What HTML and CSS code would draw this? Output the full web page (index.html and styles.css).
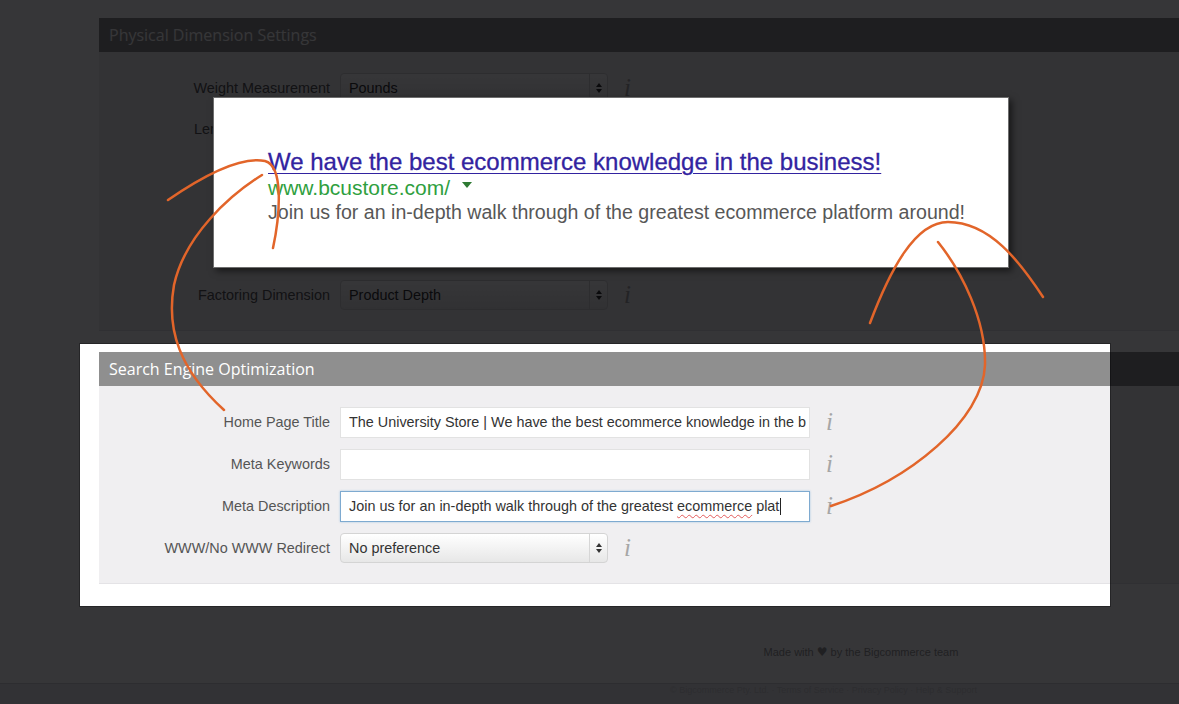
FILE: index.html
```html
<!DOCTYPE html>
<html lang="en">
<head>
<meta charset="utf-8">
<title>Search Engine Optimization</title>
<link rel="stylesheet" href="styles.css">
</head>
<body>
<div class="page">
  <div class="content">
    <section class="panel">
      <div class="panel-head">Physical Dimension Settings</div>
      <div class="panel-body dim-body">
        <div class="row"><div class="label">Weight Measurement</div><div class="select"><span class="select-text">Pounds</span><span class="arrows"><svg width="6" height="10" viewBox="0 0 6 10"><path d="M3 0 L6 4 L0 4 Z M0 6 L6 6 L3 10 Z" fill="#333"/></svg></span></div><span class="info">i</span></div>
        <div class="row"><div class="label">Length Measurement</div><div class="select"><span class="select-text"></span><span class="arrows"><svg width="6" height="10" viewBox="0 0 6 10"><path d="M3 0 L6 4 L0 4 Z M0 6 L6 6 L3 10 Z" fill="#333"/></svg></span></div></div>
        <div class="row"><div class="label"></div><div class="input short"></div></div>
        <div class="row"><div class="label"></div><div class="input short"></div></div>
        <div class="row"><div class="label"></div><div class="input short"></div></div>
        <div class="row"><div class="label">Factoring Dimension</div><div class="select"><span class="select-text">Product Depth</span><span class="arrows"><svg width="6" height="10" viewBox="0 0 6 10"><path d="M3 0 L6 4 L0 4 Z M0 6 L6 6 L3 10 Z" fill="#333"/></svg></span></div><span class="info">i</span></div>
      </div>
    </section>

    <section class="panel seo">
      <div class="panel-head">Search Engine Optimization</div>
      <div class="panel-body">
        <div class="row"><div class="label">Home Page Title</div><div class="input">The University Store | We have the best ecommerce knowledge in the b</div><span class="info">i</span></div>
        <div class="row"><div class="label">Meta Keywords</div><div class="input"></div><span class="info">i</span></div>
        <div class="row"><div class="label">Meta Description</div><div class="input focus">Join us for an in-depth walk through of the greatest <span class="misspelled">ecommerce</span> plat<span class="caret"></span></div><span class="info">i</span></div>
        <div class="row"><div class="label">WWW/No WWW Redirect</div><div class="select"><span class="select-text">No preference</span><span class="arrows"><svg width="6" height="10" viewBox="0 0 6 10"><path d="M3 0 L6 4 L0 4 Z M0 6 L6 6 L3 10 Z" fill="#333"/></svg></span></div><span class="info">i</span></div>
      </div>
    </section>

    <footer class="footer">Made with <span class="heart">♥</span> by the Bigcommerce team</footer>
  </div>
  <div class="bottom-bar">© Bigcommerce Pty. Ltd. · Terms of Service · Privacy Policy · Help &amp; Support</div>
</div>

<div class="spotlight"></div>

<div class="serp">
  <a class="serp-title">We have the best ecommerce knowledge in the business!</a>
  <div class="serp-url">www.bcustore.com/<span class="serp-caret"></span></div>
  <div class="serp-desc">Join us for an in-depth walk through of the greatest ecommerce platform around!</div>
</div>

<svg class="annot" width="1179" height="704" viewBox="0 0 1179 704">
  <g fill="none" stroke="#e2652a" stroke-width="2.5" stroke-linecap="round">
    <path d="M168,200 C200,178 240,156 265,161 C284,166 280,215 273,248"/>
    <path d="M262,175 C230,195 185,235 174,285 C166,330 180,370 224,410"/>
    <path d="M870,323 C890,270 915,222 948,222 C990,222 1020,262 1043,297"/>
    <path d="M938,242 C962,272 986,320 985,365 C983,420 910,480 831,506"/>
  </g>
</svg>
</body>
</html>
```

FILE: styles.css
```css
* { box-sizing: border-box; }

html, body {
  margin: 0;
  padding: 0;
}

body {
  position: relative;
  width: 1179px;
  height: 704px;
  overflow: hidden;
  background: #ffffff;
  font-family: "Liberation Sans", Arial, sans-serif;
}

.page {
  display: flex;
  flex-direction: column;
  height: 704px;
}

.content {
  flex: 1;
  width: 1524px;
  margin-left: 99px;
  padding-top: 18px;
}

.panel + .panel {
  margin-top: 21px;
}

.panel-head {
  height: 34px;
  padding-left: 10px;
  background: #8f8f8f;
  color: #ffffff;
  font-family: "Open Sans", "Liberation Sans", sans-serif;
  font-size: 16px;
  line-height: 34px;
}

.panel-body {
  display: flex;
  flex-direction: column;
  gap: 11px;
  padding: 21px 0 19px;
  background: #f0eff1;
  border-bottom: 1px solid #e4e3e6;
}

.dim-body {
  padding-top: 20px;
  gap: 10.6px;
}

.row {
  display: flex;
  align-items: center;
  height: 31px;
}

.label {
  width: 231px;
  margin-right: 10px;
  text-align: right;
  font-size: 14.4px;
  color: #555555;
  white-space: nowrap;
}

.input {
  width: 470px;
  height: 31px;
  padding: 0 8px;
  background: #ffffff;
  border: 1px solid #e2e2e2;
  font-size: 14.4px;
  line-height: 29px;
  color: #333333;
  white-space: nowrap;
  overflow: hidden;
}

.input.short {
  width: 268px;
}

.input.focus {
  border-color: #7eaad0;
  box-shadow: 0 0 2px rgba(82, 150, 210, 0.45);
}

.misspelled {
  text-decoration: underline wavy #e25a5a;
  text-decoration-thickness: 1px;
  text-underline-offset: 3px;
}

.caret {
  display: inline-block;
  width: 1px;
  height: 17px;
  margin-left: 1px;
  vertical-align: -4px;
  background: #222222;
}

.select {
  display: flex;
  align-items: stretch;
  width: 268px;
  height: 30px;
  border: 1px solid #d4d4d4;
  border-radius: 4px;
  background: linear-gradient(#ffffff, #e7e7e7);
  font-size: 14.4px;
  color: #333333;
}

.select-text {
  flex: 1;
  padding-left: 8px;
  line-height: 28px;
}

.arrows {
  display: flex;
  align-items: center;
  justify-content: center;
  width: 18px;
  border-left: 1px solid #d6d6d6;
}

.info {
  margin-left: 16px;
  font-family: "Liberation Serif", "Times New Roman", serif;
  font-style: italic;
  font-size: 25px;
  line-height: 24px;
  color: #a6a6a6;
}

.footer {
  padding-top: 61px;
  text-align: center;
  font-size: 11px;
  line-height: 14px;
  color: #999999;
}

.heart {
  font-family: "DejaVu Sans", sans-serif;
  font-size: 12px;
}

.bottom-bar {
  height: 21px;
  padding-top: 1px;
  padding-left: 670px;
  border-top: 1px solid #d3d3d7;
  background: #ececf0;
  font-size: 9px;
  color: #d2d2d6;
  white-space: nowrap;
}

/* dimming overlay with a clear window around the SEO panel */
.spotlight {
  position: absolute;
  left: 80px;
  top: 344px;
  width: 1030px;
  height: 262px;
  pointer-events: none;
  box-shadow: 0 0 0 1px rgba(0, 0, 0, 0.3), 0 0 0 3000px rgba(0, 0, 2, 0.79);
  z-index: 1;
}

/* search result preview card */
.serp {
  position: absolute;
  left: 213px;
  top: 97px;
  width: 796px;
  height: 171px;
  padding: 51px 0 0 54px;
  background: #ffffff;
  border: 1px solid #6e6e6e;
  box-shadow: 3px 3px 7px rgba(0, 0, 0, 0.55);
  font-family: "Liberation Sans", Arial, sans-serif;
  z-index: 2;
}

.serp-title {
  display: block;
  font-size: 24px;
  line-height: 26px;
  color: #3223a0;
  text-decoration: underline;
  text-decoration-thickness: 1px;
  text-underline-offset: 3px;
  white-space: nowrap;
  -webkit-text-stroke: 0.3px #3223a0;
}

.serp-url {
  display: flex;
  align-items: center;
  font-size: 21px;
  line-height: 25px;
  color: #2f9f40;
}

.serp-caret {
  width: 0;
  height: 0;
  margin-left: 12px;
  margin-top: -6px;
  border-left: 5.5px solid transparent;
  border-right: 5.5px solid transparent;
  border-top: 6px solid #2e7a33;
}

.serp-desc {
  font-size: 19.6px;
  line-height: 25px;
  color: #575757;
  white-space: nowrap;
}

.annot {
  position: absolute;
  left: 0;
  top: 0;
  pointer-events: none;
  z-index: 3;
}
```
